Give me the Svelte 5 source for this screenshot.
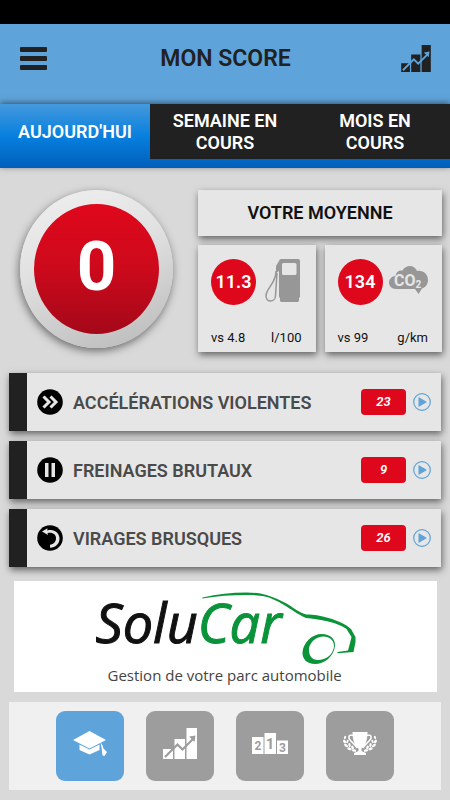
<script lang="ts">
	type Tab = { id: string; label: string };
	type Alert = { icon: 'accel' | 'brake' | 'turn'; label: string; count: number };

	const tabs: Tab[] = [
		{ id: 'day', label: "Aujourd'hui" },
		{ id: 'week', label: 'Semaine en cours' },
		{ id: 'month', label: 'Mois en cours' }
	];

	const averages = [
		{ id: 'fuel', value: '11.3', target: '4.8', unit: 'l/100' },
		{ id: 'co2', value: '134', target: '99', unit: 'g/km' }
	];

	const alerts: Alert[] = [
		{ icon: 'accel', label: 'Accélérations violentes', count: 23 },
		{ icon: 'brake', label: 'Freinages brutaux', count: 9 },
		{ icon: 'turn', label: 'Virages brusques', count: 26 }
	];

	const sections = [
		{ id: 'score', label: 'Mon score' },
		{ id: 'stats', label: 'Statistiques' },
		{ id: 'ranking', label: 'Classement' },
		{ id: 'rewards', label: 'Récompenses' }
	];

	const score = 0;
	let activeTab = $state('day');
	let activeSection = $state('score');
</script>

{#snippet chartIcon(line: string)}
	<svg class="chart-icon" viewBox="0 0 34 31" aria-hidden="true">
		<path d="M0 21h10v10H0zM11.500 11h10.500v20H11.500zM23.500 0h10.500v31H23.500z" fill="currentColor" />
		<path d="M2 29l12.500-12.500 5 5L30 11" fill="none" stroke={line} stroke-width="2.200" />
		<path d="M26 8.500l6.500-1-1 6.500z" fill={line} />
	</svg>
{/snippet}

<div class="app">
	<div class="status-bar"></div>

	<header class="topbar">
		<button class="icon-btn menu" aria-label="Menu">
			<span></span>
			<span></span>
			<span></span>
		</button>
		<h1>Mon score</h1>
		<button class="icon-btn" aria-label="Statistiques">
			{@render chartIcon('#5ea3d9')}
		</button>
	</header>

	<nav class="tabs">
		{#each tabs as tab (tab.id)}
			<button class="tab" class:active={activeTab === tab.id} onclick={() => (activeTab = tab.id)}>
				{tab.label}
			</button>
		{/each}
	</nav>

	<main>
		<section class="summary">
			<div class="gauge">
				<div class="gauge-value">{score}</div>
			</div>

			<div class="averages">
				<h2 class="panel">Votre moyenne</h2>
				<div class="average-grid">
					{#each averages as avg (avg.id)}
						<div class="panel average">
							<div class="average-top">
								<span class="bubble">{avg.value}</span>
								<span class="average-icon">
									{#if avg.id === 'fuel'}
										<svg width="36" height="43" viewBox="0 0 36 43" aria-hidden="true">
											<path
												fill="#979797"
												fill-rule="evenodd"
												d="M16 0h17q2 0 2 2v36l-1 1v3l-1 1H16l-1-1v-3l-1-1V12l-3 2V7l3-5q.5-2 2-2zM18.500 4q-1.500 0-1.500 1.500v9q0 1.500 1.500 1.500H30q1.500 0 1.500-1.500v-9Q31.500 4 30 4z"
											/>
											<path
												d="M11 12C11 25 1 29 1 37c0 3 2 5 4.500 5S10.500 40 10.500 36.500L12 14"
												fill="none"
												stroke="#979797"
												stroke-width="1.500"
											/>
										</svg>
									{:else}
										<svg width="40" height="29" viewBox="0 0 40 29" aria-hidden="true">
											<path
												fill="#979797"
												d="M7 23C2.500 23 0 20 0 16.500S3 10 6.500 10C7 6 10 4 13.500 4.500C15 1.500 18 0 21 0s6 2 7 5c6-1 11 3 11 9 0 4-2.500 7.500-6 8.500L29.500 28 26 23z"
											/>
											<text x="5" y="20" class="co2">CO<tspan class="co2-sub" dy="2">2</tspan></text>
										</svg>
									{/if}
								</span>
							</div>
							<div class="average-foot">
								<span>vs {avg.target}</span>
								<span>{avg.unit}</span>
							</div>
						</div>
					{/each}
				</div>
			</div>
		</section>

		<ul class="alerts">
			{#each alerts as alert (alert.icon)}
				<li class="alert">
					<svg class="alert-icon" viewBox="0 0 26 26" aria-hidden="true">
						<circle cx="13" cy="13" r="12.800" fill="#000" />
						{#if alert.icon === 'accel'}
							<path d="M6.500 7.500L12 13l-5.500 5.500M13.500 7.500L19 13l-5.500 5.500" fill="none" stroke="#e6e6e6" stroke-width="3" />
						{:else if alert.icon === 'brake'}
							<path d="M8 6h3.500v14H8zM14.500 6H18v14h-3.500z" fill="#e6e6e6" />
						{:else}
							<path d="M5 6.500L10.500 3.200l-.3 2.200C17 3.500 22.500 7.500 22.500 13.500c0 5.500-4 9-9.500 9.200v-3c3.500-.5 6-3 6-6.500 0-4-3.500-6.500-8.500-5.200l.5 2z" fill="#e6e6e6" />
						{/if}
					</svg>
					<span class="alert-label">{alert.label}</span>
					<span class="count">{alert.count}</span>
					<button class="play" aria-label="Voir {alert.label}">
						<svg width="18" height="18" viewBox="0 0 18 18" aria-hidden="true">
							<circle cx="9" cy="9" r="8.300" fill="none" stroke="#5ea3d9" stroke-width="1.200" />
							<path d="M5.500 4L14 9l-8.500 5z" fill="#5ea3d9" />
						</svg>
					</button>
				</li>
			{/each}
		</ul>

		<div class="brand">
			<svg viewBox="0 0 300 111" role="img" aria-label="SoluCar">
				<text x="20" y="62" class="brand-name">Solu<tspan class="brand-accent">Car</tspan></text>
				<g fill="#0a9339">
					<path
						d="M127 16.500C142 13 156 11.500 171 11.500c8 0 14 1 20 2.500 8 2.500 14 5.500 20 8.500 8 5 13 9 20 11 8 0 13 1 20 3 8 2 14 4.500 20 8l4.500 3.500 4.500 8v5l-2 10-16 1.200v-1.200l10.500-1.500 2-7.500 1.500-6-5-8c-6-4-12-6-20.500-8-7-1.500-13-2.500-20-3-9-4-15-9-22-13-7-4.500-13-7-19-8.500-5-1.200-12-1.500-19-1.500-15 0-29 1-44 3.500z"
					/>
					<path
						fill-rule="evenodd"
						d="M246 53c9 0 14 5 13.500 12-1.500 11-11 18-20 18-8 0-13-5-12.500-12 1-10 10-18 19-18zM248 55.500c-7 0-13.500 5.500-14.500 12-.5 7 3 11.500 9 11.500 8 0 14.500-5 16-13 .5-6-4-10.500-10.500-10.500z"
					/>
				</g>
				<text x="32" y="100" class="brand-tagline">Gestion de votre parc automobile</text>
			</svg>
		</div>

		<nav class="dock">
			{#each sections as section (section.id)}
				<button
					class="dock-btn"
					class:active={activeSection === section.id}
					aria-label={section.label}
					onclick={() => (activeSection = section.id)}
				>
					{#if section.id === 'score'}
						<svg width="36" height="25" viewBox="0 0 36 25" aria-hidden="true">
							<path d="M1 9L17.500 0 34 9l-16.500 8.500z" fill="#fff" />
							<path d="M7.500 13.500l10 5 10-5V19l-10 4.500-10-4.500z" fill="#fff" />
							<path d="M28.500 11.500c2 2 2.500 4 3 6l3.500 3.500-2.500 4-2-.5c-.5-5-1-9-2-13z" fill="#fff" />
						</svg>
					{:else if section.id === 'stats'}
						{@render chartIcon('#9d9d9d')}
					{:else if section.id === 'ranking'}
						<svg width="36" height="21" viewBox="0 0 36 21" aria-hidden="true">
							<path d="M0 4h11.500v17H0zM12.500 0H24v21H12.500zM25 7.500h11V21H25z" fill="#fff" />
							<text x="6" y="17" class="rank">2</text>
							<text x="18" y="16" class="rank first">1</text>
							<text x="30.500" y="18.500" class="rank">3</text>
						</svg>
					{:else}
						<svg width="34" height="24" viewBox="0 0 34 24" aria-hidden="true">
							<path d="M9.500 0h15c0 8-2 14-6 16.500v2.500l4.500 2v2H11v-2l4.500-2v-2.500C11.500 14 9.500 8 9.500 0z" fill="#fff" />
							<path
								d="M10 3.500C5 2 5 6 7.500 8.500c2 2.500 4.500 3.500 6.500 7.500M24 3.500c5-1.500 5 2.500 2.500 5-2 2.500-4.500 3.500-6.500 7.500"
								fill="none"
								stroke="#fff"
								stroke-width="1.500"
							/>
							{#each ['', 'translate(34 0) scale(-1 1)'] as side}
								<g fill="#fff" transform={side}>
									<ellipse cx="2" cy="5.500" rx="1" ry="1.800" transform="rotate(20 2 5.500)" />
									<ellipse cx="1.600" cy="9.500" rx="1.300" ry="1.900" transform="rotate(-30 1.600 9.500)" />
									<ellipse cx="4.500" cy="9.500" rx="1" ry="1.800" transform="rotate(20 4.500 9.500)" />
									<ellipse cx="3" cy="13.500" rx="1.300" ry="2.200" transform="rotate(-50 3 13.500)" />
									<ellipse cx="6.500" cy="13" rx="1.200" ry="2" transform="rotate(-5 6.500 13)" />
									<ellipse cx="6.500" cy="16.800" rx="1.400" ry="2.300" transform="rotate(-70 6.500 16.800)" />
									<ellipse cx="9.500" cy="15.500" rx="1.200" ry="2" transform="rotate(-25 9.500 15.500)" />
									<ellipse cx="11" cy="18.500" rx="1.300" ry="2.200" transform="rotate(-80 11 18.500)" />
								</g>
							{/each}
						</svg>
					{/if}
				</button>
			{/each}
		</nav>
	</main>
</div>

<style>
	:global(body) {
		background: #d9d9d9;
	}

	.app {
		font-family: Roboto, 'Liberation Sans', sans-serif;
		color: #111;
	}

	button {
		border: none;
		padding: 0;
		margin: 0;
		background: none;
		font: inherit;
		color: inherit;
		cursor: pointer;
	}

	svg {
		display: block;
	}

	.status-bar {
		height: 24px;
		background: #000;
	}

	/* Header */
	.topbar {
		display: flex;
		align-items: center;
		justify-content: space-between;
		height: 80px;
		padding: 0 19px 11px 20px;
		box-sizing: border-box;
		background: #5ea3d9;
		color: #212121;
	}

	.topbar h1 {
		margin: 0;
		font-size: 23px;
		font-weight: 600;
		text-transform: uppercase;
	}

	.icon-btn {
		width: 30px;
	}

	.icon-btn .chart-icon {
		width: 30px;
		height: 27px;
	}

	.menu {
		display: flex;
		flex-direction: column;
		gap: 4px;
	}

	.menu span {
		height: 5px;
		width: 27px;
		border-radius: 1px;
		background: #212121;
	}

	/* Tabs */
	.tabs {
		position: relative;
		display: flex;
		padding-bottom: 9px;
		background: linear-gradient(#4599dc, #0780df 50%, #005eba);
		box-shadow: 0 -1px 6px rgba(0, 0, 0, 0.5);
	}

	.tab {
		flex: 1;
		min-height: 55px;
		padding: 6px 16px 5px;
		background: #212121;
		color: #fff;
		font-size: 18px;
		font-weight: 600;
		line-height: 22px;
		text-transform: uppercase;
	}

	.tab.active {
		background: none;
	}

	/* Score and averages */
	.summary {
		display: flex;
		align-items: flex-start;
		gap: 25px;
		padding: 22px 8px 21px 20px;
	}

	.gauge {
		display: flex;
		flex: none;
		width: 153px;
		height: 158px;
		padding: 14px;
		box-sizing: border-box;
		border-radius: 50%;
		background: linear-gradient(160deg, #f0f0f0, #e2e2e2 40%, #b9b9b9);
		box-shadow: -1px 3px 8px rgba(0, 0, 0, 0.5);
	}

	.gauge-value {
		display: flex;
		flex: 1;
		align-items: center;
		justify-content: center;
		padding-bottom: 6px;
		border-radius: 50%;
		background: linear-gradient(#df071b, #cf0a1c 45%, #a40819);
		color: #fff;
		font-size: 69px;
		font-weight: 700;
	}

	.panel {
		background: #e6e6e6;
		box-shadow: 1px 3px 7px rgba(0, 0, 0, 0.55);
	}

	.averages {
		flex: 1;
	}

	.averages h2 {
		margin: 0 0 9px;
		font-size: 18px;
		font-weight: 600;
		line-height: 46px;
		text-align: center;
		text-transform: uppercase;
	}

	.average-grid {
		display: grid;
		grid-template-columns: 1fr 1fr;
		gap: 9px;
	}

	.average {
		padding: 14px 6px 4px 13px;
	}

	.average-top {
		display: flex;
	}

	.bubble {
		width: 45px;
		border-radius: 50%;
		background: #df071b;
		color: #fff;
		font-size: 18px;
		font-weight: 600;
		line-height: 46px;
		text-align: center;
	}

	.average-icon {
		display: flex;
		flex: 1;
		justify-content: center;
		align-items: center;
		height: 43px;
	}

	.co2 {
		fill: #e6e6e6;
		font-size: 16px;
		font-weight: 700;
	}

	.co2-sub {
		font-size: 10px;
	}

	.average-foot {
		display: flex;
		justify-content: space-between;
		padding: 23px 8px 0 0;
		font-size: 13px;
		line-height: 20px;
	}

	/* Alerts */
	.alerts {
		display: flex;
		flex-direction: column;
		gap: 10px;
		margin: 0;
		padding: 0 9px;
		list-style: none;
	}

	.alert {
		display: flex;
		align-items: center;
		min-height: 58px;
		padding: 0 10px;
		box-sizing: border-box;
		border-left: 18px solid #212121;
		background: #e6e6e6;
		box-shadow: 1px 3px 7px rgba(0, 0, 0, 0.55);
	}

	.alert-icon {
		width: 26px;
		height: 26px;
	}

	.alert-label {
		flex: 1;
		padding-left: 10px;
		color: #4a4a4a;
		font-size: 18px;
		font-weight: 600;
		text-transform: uppercase;
	}

	.count {
		width: 45px;
		margin-right: 7px;
		border-radius: 4px;
		background: #df071b;
		color: #fff;
		font-size: 13px;
		font-style: italic;
		font-weight: 600;
		line-height: 26px;
		text-align: center;
	}

	/* Brand banner */
	.brand {
		margin: 14px 13px 10px 14px;
		background: #fff;
	}

	.brand svg {
		width: 100%;
		height: 111px;
	}

	.brand-name {
		font-family: 'Open Sans', 'Noto Sans', sans-serif;
		font-size: 54px;
		font-style: italic;
		fill: #111;
		stroke: #111;
		stroke-width: 1px;
	}

	.brand-accent {
		fill: #0a9339;
		stroke: #0a9339;
	}

	.brand-tagline {
		font-family: 'Open Sans', 'Noto Sans', sans-serif;
		font-size: 15px;
		fill: #444;
	}

	/* Bottom dock */
	.dock {
		display: flex;
		justify-content: center;
		gap: 22px;
		margin: 0 9px 10px;
		padding: 9px 0;
		background: #f0f0f0;
	}

	.dock-btn {
		display: flex;
		align-items: center;
		justify-content: center;
		width: 68px;
		height: 70px;
		padding-bottom: 5px;
		border-radius: 9px;
		background: #9d9d9d;
		color: #fff;
	}

	.dock-btn.active {
		background: #5ea3d9;
	}

	.dock-btn .chart-icon {
		width: 34px;
		height: 31px;
	}

	.rank {
		fill: #9d9d9d;
		font-size: 12px;
		font-weight: 700;
		text-anchor: middle;
	}

	.rank.first {
		font-size: 15px;
	}
</style>
